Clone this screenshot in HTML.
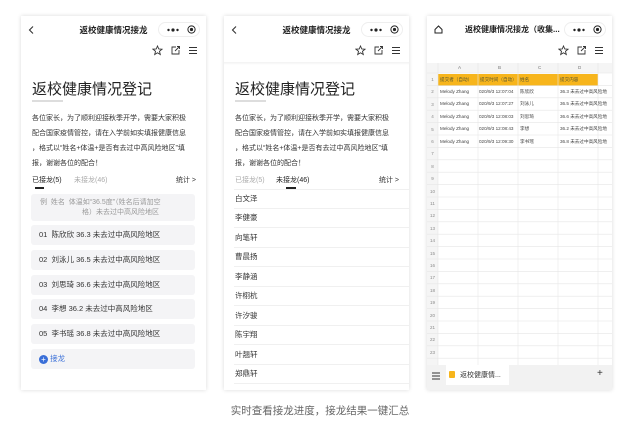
<!DOCTYPE html>
<html><head><meta charset="utf-8"><style>
*{margin:0;padding:0;box-sizing:border-box}
body{width:640px;height:430px;background:#fff;position:relative;overflow:hidden;font-family:"Liberation Sans","Noto Sans CJK SC",sans-serif;color:#222}
.ph{position:absolute;top:16px;width:185px;height:374px;background:#fff;box-shadow:0 0 4px rgba(0,0,0,.15);overflow:hidden}
.a{position:absolute;white-space:nowrap}
.nt{top:8px;left:0;width:100%;text-align:center;font-size:8.5px;font-weight:bold;color:#222}
.cap{top:6px;right:6px;width:42px;height:15px;border:1px solid #eee;border-radius:8px}
.h1{left:11px;top:62px;font-size:15px;color:#222}
.ul{left:11px;top:84px;width:31px;height:2px;border-top:1px solid #ddd;border-bottom:1px solid #ddd}
.p{left:11px;top:95px;font-size:7px;line-height:15px;color:#333}
.tab{font-size:7px;top:159px}
.box{left:10px;width:164px;background:#f4f4f6;border-radius:3px;font-size:7.5px;color:#333;padding-left:8px}
.nm{left:11px;font-size:7.5px;color:#333}
.ln{left:10px;width:175px;height:1px;background:#f0f0f0}
.g{position:absolute;background:#e6e6e6}
.c{position:absolute;font-size:4.6px;color:#444;white-space:nowrap;overflow:hidden}
.rn{position:absolute;left:0;width:11px;text-align:center;font-size:4.5px;color:#888}
</style></head><body>

<!-- phone 1 -->
<div class="ph" style="left:21px">
 <svg class="a" style="left:7px;top:10px" width="6" height="8"><path d="M5 0.5 L1.5 4 L5 7.5" stroke="#333" stroke-width="1.1" fill="none"/></svg>
 <div class="a nt">返校健康情况接龙</div>
 <div class="a cap"></div>
 <svg class="a" style="top:12px;right:27px" width="12" height="4"><circle cx="1.5" cy="2" r="1.2" fill="#222"/><circle cx="6" cy="2" r="1.6" fill="#222"/><circle cx="10.5" cy="2" r="1.2" fill="#222"/></svg>
 <svg class="a" style="top:9px;right:10px" width="9" height="9"><circle cx="4.5" cy="4.5" r="3.6" stroke="#222" stroke-width="1" fill="none"/><circle cx="4.5" cy="4.5" r="1.6" fill="#222"/></svg>
 <svg class="a" style="top:29px;left:131px" width="50" height="11"><path d="M5.5 1 L6.8 4 L10 4.2 L7.5 6.3 L8.3 9.5 L5.5 7.8 L2.7 9.5 L3.5 6.3 L1 4.2 L4.2 4 Z" stroke="#333" stroke-width=".9" fill="none"/><path d="M24 2 H20 V9 H27 V5 M23 6 L27.5 1.5 M25 1.5 H27.5 V4" stroke="#333" stroke-width=".9" fill="none"/><path d="M37 2.5H45M37 5.5H45M37 8.5H45" stroke="#333" stroke-width=".9"/></svg>
 <div class="a h1">返校健康情况登记</div>
 <div class="a ul"></div>
 <div class="a p">各位家长，为了顺利迎接秋季开学，需要大家积极<br>配合国家疫情管控，请在入学前如实填报健康信息<br>，格式以“姓名+体温+是否有去过中高风险地区”填<br>报，谢谢各位的配合！</div>
 <div class="a tab" style="left:11px;color:#222">已接龙(5)</div>
 <div class="a" style="left:14px;top:171px;width:9px;height:1.5px;background:#222"></div>
 <div class="a tab" style="left:53px;color:#aaa">未接龙(46)</div>
 <div class="a tab" style="right:10px;color:#333">统计 &gt;</div>
 <div class="a box" style="top:178px;height:27px;color:#999;font-size:7px;line-height:10px;padding-top:4px;padding-left:9px">例&nbsp;&nbsp;姓名&nbsp;&nbsp;体温如“36.5度”（姓名后请加空<br><span style="padding-left:42px">格）未去过中高风险地区</span></div>
 <div class="a box" style="top:209px;height:20px;line-height:20px">01&nbsp;&nbsp;陈欣欣 36.3 未去过中高风险地区</div>
 <div class="a box" style="top:234px;height:20px;line-height:20px">02&nbsp;&nbsp;刘泳儿 36.5 未去过中高风险地区</div>
 <div class="a box" style="top:259px;height:20px;line-height:20px">03&nbsp;&nbsp;刘思琦 36.6 未去过中高风险地区</div>
 <div class="a box" style="top:283px;height:20px;line-height:20px">04&nbsp;&nbsp;李想 36.2 未去过中高风险地区</div>
 <div class="a box" style="top:308px;height:20px;line-height:20px">05&nbsp;&nbsp;李书瑶 36.8 未去过中高风险地区</div>
 <div class="a box" style="top:333px;height:20px;line-height:20px;color:#3a6fd8"><span style="display:inline-block;width:9px;height:9px;border-radius:50%;background:#3a6fd8;color:#fff;text-align:center;line-height:9px;font-size:8px;vertical-align:-1px">+</span>&nbsp;接龙</div>
</div>

<!-- phone 2 -->
<div class="ph" style="left:224px">
 <svg class="a" style="left:7px;top:10px" width="6" height="8"><path d="M5 0.5 L1.5 4 L5 7.5" stroke="#333" stroke-width="1.1" fill="none"/></svg>
 <div class="a nt">返校健康情况接龙</div>
 <div class="a cap"></div>
 <svg class="a" style="top:12px;right:27px" width="12" height="4"><circle cx="1.5" cy="2" r="1.2" fill="#222"/><circle cx="6" cy="2" r="1.6" fill="#222"/><circle cx="10.5" cy="2" r="1.2" fill="#222"/></svg>
 <svg class="a" style="top:9px;right:10px" width="9" height="9"><circle cx="4.5" cy="4.5" r="3.6" stroke="#222" stroke-width="1" fill="none"/><circle cx="4.5" cy="4.5" r="1.6" fill="#222"/></svg>
 <svg class="a" style="top:29px;left:131px" width="50" height="11"><path d="M5.5 1 L6.8 4 L10 4.2 L7.5 6.3 L8.3 9.5 L5.5 7.8 L2.7 9.5 L3.5 6.3 L1 4.2 L4.2 4 Z" stroke="#333" stroke-width=".9" fill="none"/><path d="M24 2 H20 V9 H27 V5 M23 6 L27.5 1.5 M25 1.5 H27.5 V4" stroke="#333" stroke-width=".9" fill="none"/><path d="M37 2.5H45M37 5.5H45M37 8.5H45" stroke="#333" stroke-width=".9"/></svg>
 <div class="a" style="left:0;top:46px;width:185px;height:3px;background:linear-gradient(#f2f2f2,#fff)"></div>
 <div class="a h1">返校健康情况登记</div>
 <div class="a ul"></div>
 <div class="a p">各位家长，为了顺利迎接秋季开学，需要大家积极<br>配合国家疫情管控，请在入学前如实填报健康信息<br>，格式以“姓名+体温+是否有去过中高风险地区”填<br>报，谢谢各位的配合！</div>
 <div class="a tab" style="left:11px;color:#aaa">已接龙(5)</div>
 <div class="a tab" style="left:52px;color:#222">未接龙(46)</div>
 <div class="a" style="left:62px;top:171px;width:10px;height:1.5px;background:#222"></div>
 <div class="a tab" style="right:10px;color:#333">统计 &gt;</div>
 <div class="a ln" style="top:173px"></div>
 <div class="a nm" style="top:177px">白文泽</div><div class="a ln" style="top:192px"></div>
 <div class="a nm" style="top:196px">李健豪</div><div class="a ln" style="top:211px"></div>
 <div class="a nm" style="top:216px">向笔轩</div><div class="a ln" style="top:231px"></div>
 <div class="a nm" style="top:235px">曹晨扬</div><div class="a ln" style="top:250px"></div>
 <div class="a nm" style="top:255px">李静涵</div><div class="a ln" style="top:270px"></div>
 <div class="a nm" style="top:274px">许栩杭</div><div class="a ln" style="top:289px"></div>
 <div class="a nm" style="top:294px">许汐骏</div><div class="a ln" style="top:309px"></div>
 <div class="a nm" style="top:313px">陈宇翔</div><div class="a ln" style="top:328px"></div>
 <div class="a nm" style="top:333px">叶翘轩</div><div class="a ln" style="top:348px"></div>
 <div class="a nm" style="top:352px">郑鼎轩</div><div class="a ln" style="top:367px"></div>
</div>

<!-- phone 3 -->
<div class="ph" style="left:427px;background:#fff">
 <svg class="a" style="left:7px;top:9px" width="9" height="9"><path d="M1 4.5 L4.5 1 L8 4.5 V8 H1 Z" stroke="#222" stroke-width="1" fill="none"/></svg>
 <div class="a nt" style="left:38px;width:96px;text-align:left;font-size:8px">返校健康情况接龙（收集...</div>
 <div class="a cap"></div>
 <svg class="a" style="top:12px;right:27px" width="12" height="4"><circle cx="1.5" cy="2" r="1.2" fill="#222"/><circle cx="6" cy="2" r="1.6" fill="#222"/><circle cx="10.5" cy="2" r="1.2" fill="#222"/></svg>
 <svg class="a" style="top:9px;right:10px" width="9" height="9"><circle cx="4.5" cy="4.5" r="3.6" stroke="#222" stroke-width="1" fill="none"/><circle cx="4.5" cy="4.5" r="1.6" fill="#222"/></svg>
 <svg class="a" style="top:29px;left:131px" width="50" height="11"><path d="M5.5 1 L6.8 4 L10 4.2 L7.5 6.3 L8.3 9.5 L5.5 7.8 L2.7 9.5 L3.5 6.3 L1 4.2 L4.2 4 Z" stroke="#333" stroke-width=".9" fill="none"/><path d="M24 2 H20 V9 H27 V5 M23 6 L27.5 1.5 M25 1.5 H27.5 V4" stroke="#333" stroke-width=".9" fill="none"/><path d="M37 2.5H45M37 5.5H45M37 8.5H45" stroke="#333" stroke-width=".9"/></svg>
 <div class="a" style="left:0;top:47px;width:185px;height:302px;overflow:hidden">
  <div class="g" style="left:0;top:0;width:185px;height:10px;background:#f5f5f5"></div>
  <div class="g" style="left:0;top:0;width:11px;height:302px;background:#f5f5f5"></div>
  <div class="g" style="left:11px;top:10.5px;width:160px;height:12px;background:#f7b51c"></div>
  <div class="c" style="left:31px;top:2px;color:#777">A</div>
  <div class="c" style="left:71px;top:2px;color:#777">B</div>
  <div class="c" style="left:111px;top:2px;color:#777">C</div>
  <div class="c" style="left:151px;top:2px;color:#777">D</div>
  <svg style="position:absolute;left:0;top:0" width="185" height="302">
   <g stroke="#e6e6e6" stroke-width=".6">
    <line x1="11" y1="0" x2="11" y2="302"/><line x1="51" y1="0" x2="51" y2="302"/><line x1="91" y1="0" x2="91" y2="302"/><line x1="131" y1="0" x2="131" y2="302"/><line x1="171" y1="0" x2="171" y2="302"/>
    <line x1="0" y1="10" x2="185" y2="10"/><line x1="0" y1="22.4" x2="185" y2="22.4"/><line x1="0" y1="34.8" x2="185" y2="34.8"/><line x1="0" y1="47.2" x2="185" y2="47.2"/><line x1="0" y1="59.6" x2="185" y2="59.6"/><line x1="0" y1="72" x2="185" y2="72"/><line x1="0" y1="84.4" x2="185" y2="84.4"/><line x1="0" y1="96.8" x2="185" y2="96.8"/><line x1="0" y1="109.2" x2="185" y2="109.2"/><line x1="0" y1="121.6" x2="185" y2="121.6"/><line x1="0" y1="134" x2="185" y2="134"/><line x1="0" y1="146.4" x2="185" y2="146.4"/><line x1="0" y1="158.8" x2="185" y2="158.8"/><line x1="0" y1="171.2" x2="185" y2="171.2"/><line x1="0" y1="183.6" x2="185" y2="183.6"/><line x1="0" y1="196" x2="185" y2="196"/><line x1="0" y1="208.4" x2="185" y2="208.4"/><line x1="0" y1="220.8" x2="185" y2="220.8"/><line x1="0" y1="233.2" x2="185" y2="233.2"/><line x1="0" y1="245.6" x2="185" y2="245.6"/><line x1="0" y1="258" x2="185" y2="258"/><line x1="0" y1="270.4" x2="185" y2="270.4"/><line x1="0" y1="282.8" x2="185" y2="282.8"/><line x1="0" y1="295.2" x2="185" y2="295.2"/>
   </g>
  </svg>
  <div class="c" style="left:13px;top:14px;color:#553">提交者（自动）</div>
  <div class="c" style="left:53px;top:14px;color:#553">提交时间（自动）</div>
  <div class="c" style="left:93px;top:14px;color:#553">姓名</div>
  <div class="c" style="left:133px;top:14px;color:#553">提交内容</div>
  <div class="c" style="left:13px;top:26px">Melody Zhang</div><div class="c" style="left:52px;top:26px;width:39px">020/9/3 12:07:04</div><div class="c" style="left:93px;top:26px">陈欣欣</div><div class="c" style="left:133px;top:26px;width:52px">36.3 未去过中高风险地</div>
  <div class="c" style="left:13px;top:38.4px">Melody Zhang</div><div class="c" style="left:52px;top:38.4px;width:39px">020/9/3 12:07:27</div><div class="c" style="left:93px;top:38.4px">刘泳儿</div><div class="c" style="left:133px;top:38.4px;width:52px">36.5 未去过中高风险地</div>
  <div class="c" style="left:13px;top:50.8px">Melody Zhang</div><div class="c" style="left:52px;top:50.8px;width:39px">020/9/3 12:08:03</div><div class="c" style="left:93px;top:50.8px">刘思琦</div><div class="c" style="left:133px;top:50.8px;width:52px">36.6 未去过中高风险地</div>
  <div class="c" style="left:13px;top:63.2px">Melody Zhang</div><div class="c" style="left:52px;top:63.2px;width:39px">020/9/3 12:08:43</div><div class="c" style="left:93px;top:63.2px">李想</div><div class="c" style="left:133px;top:63.2px;width:52px">36.2 未去过中高风险地</div>
  <div class="c" style="left:13px;top:75.6px">Melody Zhang</div><div class="c" style="left:52px;top:75.6px;width:39px">020/9/3 12:09:30</div><div class="c" style="left:93px;top:75.6px">李书瑶</div><div class="c" style="left:133px;top:75.6px;width:52px">36.8 未去过中高风险地</div>
  <div class="rn" style="top:14px">1</div><div class="rn" style="top:26.4px">2</div><div class="rn" style="top:38.8px">3</div><div class="rn" style="top:51.2px">4</div><div class="rn" style="top:63.6px">5</div><div class="rn" style="top:76px">6</div><div class="rn" style="top:88.4px">7</div><div class="rn" style="top:100.8px">8</div><div class="rn" style="top:113.2px">9</div><div class="rn" style="top:125.6px">10</div><div class="rn" style="top:138px">11</div><div class="rn" style="top:150.4px">12</div><div class="rn" style="top:162.8px">13</div><div class="rn" style="top:175.2px">14</div><div class="rn" style="top:187.6px">15</div><div class="rn" style="top:200px">16</div><div class="rn" style="top:212.4px">17</div><div class="rn" style="top:224.8px">18</div><div class="rn" style="top:237.2px">19</div><div class="rn" style="top:249.6px">20</div><div class="rn" style="top:262px">21</div><div class="rn" style="top:274.4px">22</div><div class="rn" style="top:286.8px">23</div>
 </div>
 <div class="a" style="left:0;top:349px;width:185px;height:25px;background:#f2f2f2"></div>
 <svg class="a" style="left:5px;top:356px" width="8" height="8"><path d="M0 1H8M0 4H8M0 7H8" stroke="#333" stroke-width="1"/></svg>
 <div class="a" style="left:19px;top:349px;width:63px;height:20px;background:#fff"></div>
 <div class="a" style="left:22px;top:355px;width:6px;height:7px;background:#f7b51c;border-radius:1px"></div>
 <div class="a" style="left:33px;top:354px;font-size:7px;color:#333">返校健康情...</div>
 <div class="a" style="left:170px;top:352px;font-size:10px;color:#333">+</div>
</div>

<div class="a" style="left:0;top:403px;width:640px;text-align:center;font-size:10.5px;color:#666">实时查看接龙进度，接龙结果一键汇总</div>
</body></html>
